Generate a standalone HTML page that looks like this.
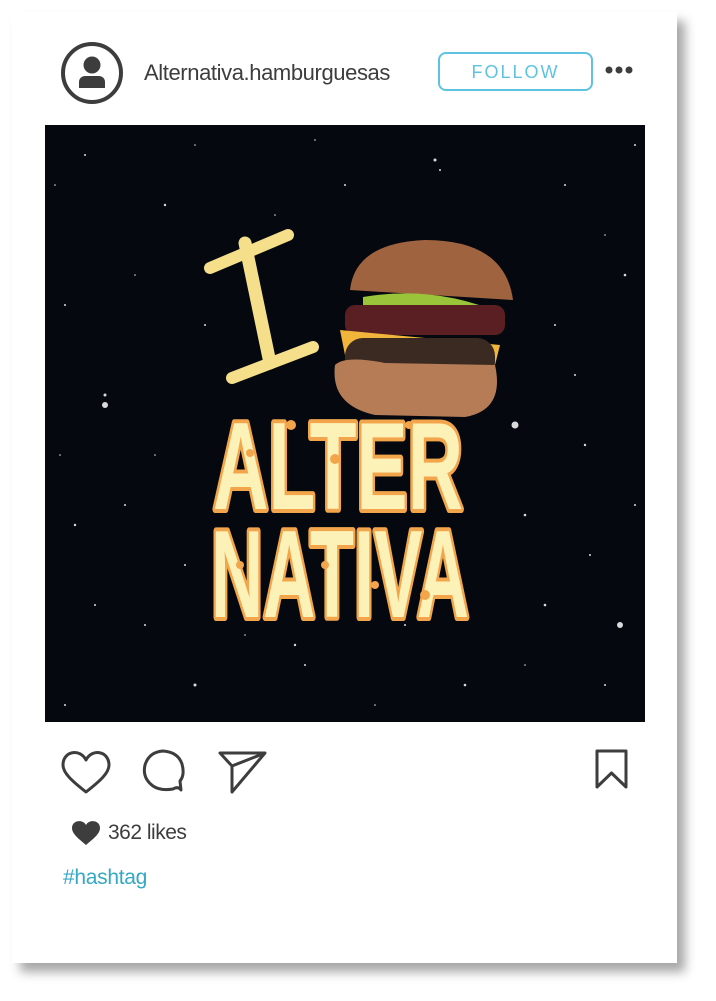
<!DOCTYPE html>
<html><head><meta charset="utf-8"><style>
body{margin:0;width:716px;height:1001px;background:#fff;position:relative;overflow:hidden;font-family:"Liberation Sans",sans-serif}
.card{position:absolute;left:12px;top:12px;width:665px;height:951px;background:#fff;box-shadow:8px 9px 10px rgba(0,0,0,.35)}
.abs{position:absolute}
</style></head><body>
<div class="card"></div>
<svg class="abs" style="left:60px;top:41px" width="64" height="64" viewBox="0 0 64 64">
<circle cx="32" cy="32" r="29" fill="none" stroke="#3d3d3d" stroke-width="4"/>
<circle cx="32" cy="24" r="8.5" fill="#3d3d3d"/>
<path d="M19 47v-6a6 6 0 0 1 6-6h14a6 6 0 0 1 6 6v6z" fill="#3d3d3d"/>
</svg>
<div class="abs" style="left:144px;top:60px;font-size:22px;color:#3d3d3d;letter-spacing:-0.4px">Alternativa.hamburguesas</div>
<div class="abs" style="left:438px;top:52px;width:151px;height:35px;border:2px solid #5fc3df;border-radius:8px;color:#5fc3df;font-size:18px;letter-spacing:2px;text-align:center;line-height:36px">FOLLOW</div>
<svg class="abs" style="left:605px;top:64px" width="28" height="12"><circle cx="4" cy="6" r="3.5" fill="#3d3d3d"/><circle cx="14" cy="6" r="3.5" fill="#3d3d3d"/><circle cx="24" cy="6" r="3.5" fill="#3d3d3d"/></svg>
<svg class="abs" style="left:45px;top:125px" width="600" height="597" viewBox="0 0 600 597">
<rect width="600" height="597" fill="#05090f"/>
<g fill="#fff" opacity=".85">
<circle cx="40" cy="30" r="1"/><circle cx="120" cy="80" r="1.2"/><circle cx="390" cy="35" r="1.5"/><circle cx="520" cy="60" r="1"/><circle cx="580" cy="150" r="1.3"/><circle cx="60" cy="270" r="1.5"/><circle cx="30" cy="400" r="1.2"/><circle cx="100" cy="500" r="1"/><circle cx="150" cy="560" r="1.5"/><circle cx="260" cy="540" r="1"/><circle cx="500" cy="480" r="1.3"/><circle cx="560" cy="560" r="1"/><circle cx="470" cy="300" r="3.5"/><circle cx="530" cy="250" r="1"/><circle cx="250" cy="520" r="1.2"/><circle cx="340" cy="180" r="1"/><circle cx="200" cy="120" r="1"/><circle cx="440" cy="130" r="1"/><circle cx="590" cy="380" r="1"/><circle cx="60" cy="280" r="3"/><circle cx="20" cy="180" r="1"/><circle cx="300" cy="60" r="1"/><circle cx="480" cy="390" r="1.3"/><circle cx="160" cy="200" r="1"/><circle cx="510" cy="200" r="1"/><circle cx="80" cy="380" r="1"/><circle cx="140" cy="440" r="1"/><circle cx="420" cy="560" r="1.3"/><circle cx="360" cy="500" r="1"/><circle cx="50" cy="480" r="1"/><circle cx="395" cy="45" r="1"/><circle cx="540" cy="320" r="1.2"/><circle cx="20" cy="580" r="1"/><circle cx="590" cy="20" r="1"/>
<circle cx="90" cy="150" r=".8"/><circle cx="230" cy="90" r=".8"/><circle cx="560" cy="110" r=".8"/><circle cx="15" cy="330" r=".8"/><circle cx="110" cy="330" r=".8"/><circle cx="545" cy="430" r="1"/><circle cx="575" cy="500" r="3"/><circle cx="200" cy="510" r=".8"/><circle cx="330" cy="580" r=".8"/><circle cx="480" cy="540" r=".8"/><circle cx="10" cy="60" r=".8"/><circle cx="150" cy="20" r=".8"/><circle cx="270" cy="15" r=".8"/>
</g>
<g stroke="#f5df8a" stroke-linecap="round" fill="none">
<path d="M165 143 L243 110" stroke-width="12"/>
<path d="M200 118 L225 238" stroke-width="13"/>
<path d="M187 253 L268 222" stroke-width="12"/>
</g>
<path d="M305 165 Q310 118 380 115 Q460 115 468 175 Z" fill="#a0633f"/>
<path d="M318 172 Q390 160 455 188 L450 192 Q390 180 318 180Z" fill="#9ac43a"/>
<rect x="300" y="180" width="160" height="30" rx="10" fill="#5a1f22"/>
<path d="M295 205 L455 220 L450 240 L300 230Z" fill="#f0b53a"/>
<rect x="300" y="213" width="150" height="42" rx="18" fill="#3b2a22"/>
<path d="M290 240 Q300 230 340 238 L450 240 Q460 285 420 292 L330 290 Q285 280 290 240Z" fill="#b67c55"/>
<g font-family="'Liberation Sans Narrow','Liberation Sans',sans-serif" font-weight="bold" fill="#fcf2b8" stroke="#f3a54c" stroke-width="8" stroke-linejoin="round" paint-order="stroke">
<text x="168" y="384" font-size="124" textLength="250" lengthAdjust="spacingAndGlyphs">ALTER</text>
<text x="166" y="492" font-size="124" textLength="258" lengthAdjust="spacingAndGlyphs">NATIVA</text>
</g>
<g fill="#f3a54c">
<circle cx="205" cy="328" r="4"/><circle cx="246" cy="300" r="5"/><circle cx="290" cy="334" r="5"/><circle cx="364" cy="300" r="4"/><circle cx="195" cy="440" r="4"/><circle cx="280" cy="440" r="4"/><circle cx="330" cy="460" r="4"/><circle cx="380" cy="470" r="5"/>
</g>
</svg>
<svg class="abs" style="left:60px;top:748px" width="220" height="50" viewBox="0 0 220 50">
<g fill="none" stroke="#3d3d3d" stroke-width="3" stroke-linejoin="round">
<path d="M26 12 C20 0 3 3 3 17 C3 25 12 33 26 44 C40 33 49 25 49 17 C49 3 32 0 26 12Z"/>
<path d="M113 41 Q100 43 93 38 Q82 30 85 17 Q89 4 103 3 Q118 4 122 16 Q125 27 120 33 L121 42 Q118 38 113 41Z"/>
<path d="M160 5 L205 5 L172 44 L172 18 Z M172 18 L205 5"/>
</g>
</svg>
<svg class="abs" style="left:592px;top:748px" width="40" height="45" viewBox="0 0 40 45">
<path d="M5 3 H34 V39 L19.5 25 L5 39Z" fill="none" stroke="#3d3d3d" stroke-width="3" stroke-linejoin="round"/>
</svg>
<svg class="abs" style="left:71px;top:820px" width="30" height="26" viewBox="0 0 30 26">
<path d="M15 5 C12 -1 1 0 1 8 C1 14 8 19 15 25 C22 19 29 14 29 8 C29 0 18 -1 15 5Z" fill="#3d3d3d"/>
</svg>
<div class="abs" style="left:108px;top:821px;font-size:21px;color:#3d3d3d;letter-spacing:-0.5px">362 likes</div>
<div class="abs" style="left:63px;top:866px;font-size:21px;color:#34a8c4;letter-spacing:-0.3px">#hashtag</div>
</body></html>
